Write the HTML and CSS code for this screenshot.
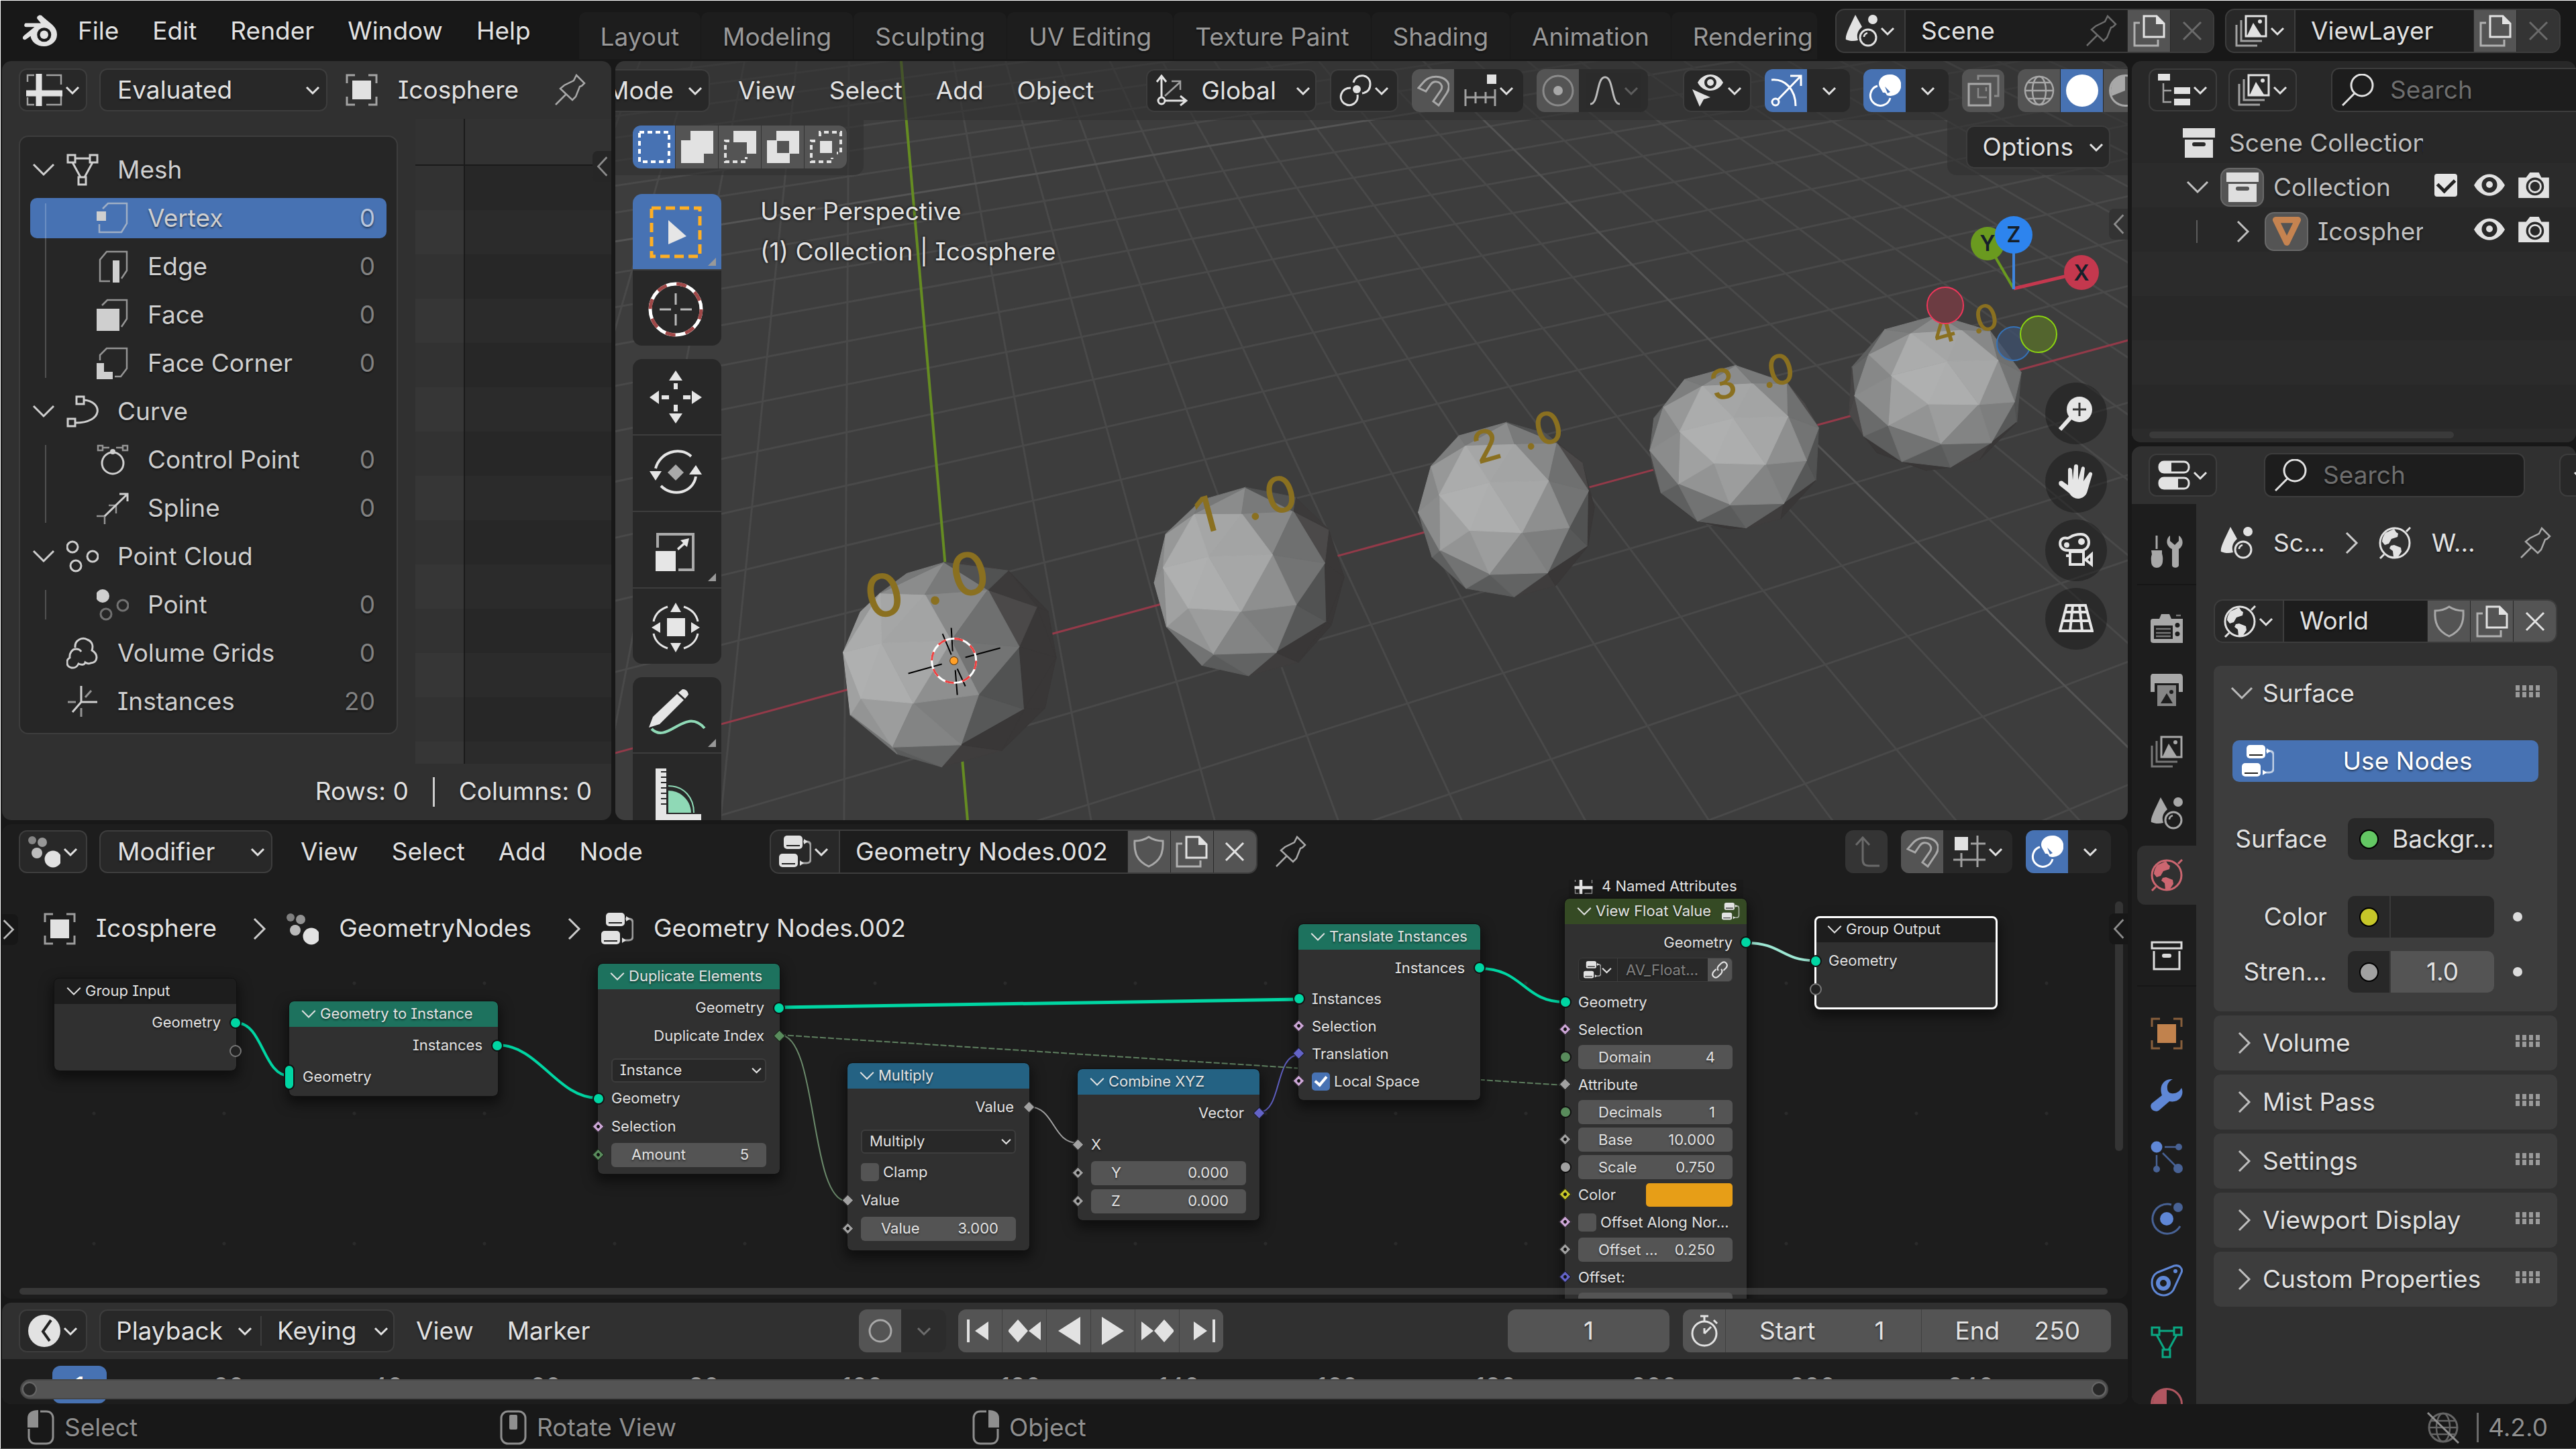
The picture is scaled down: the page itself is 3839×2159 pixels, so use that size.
FILE: index.html
```html
<!DOCTYPE html>
<html lang="en">
<head>
<meta charset="utf-8">
<title>Blender</title>
<link rel="stylesheet" href="styles.css">
</head>
<body>
<svg class="sprite" aria-hidden="true">
  <symbol id="down" viewBox="0 0 24 24"><path d="M3 8l9 9 9-9" class="s3"/></symbol>
  <symbol id="right" viewBox="0 0 24 40"><path d="M4 5l15 15-15 15" class="s3"/></symbol>
  <symbol id="left" viewBox="0 0 24 40"><path d="M20 5l-14 15 14 15" class="s3"/></symbol>
  <symbol id="open" viewBox="0 0 40 40"><path d="M5 12l15 15 15-15" class="s3"/></symbol>
  <symbol id="blender" viewBox="0 0 54 50"><path fill="currentColor" d="M25 1c2-1 4 0 6 2l13 11c6 5 9 10 9 17 0 11-10 18-20 18-11 0-20-7-21-16l-7 5c-3 2-6 0-5-3 0-1 1-2 2-3l16-13H5c-3 0-4-4-1-6 1 0 1 0 2 0h22l-5-6c-2-2-1-5 2-6z"/><circle cx="33" cy="31" r="11" fill="#181818"/><circle cx="33" cy="31" r="6.500" fill="currentColor"/></symbol>
  <symbol id="sheet" viewBox="0 0 54 48"><path d="M2 12V2h10M30 2h22v14M52 33v13H30M12 46H2V35" class="s2 dim"/><path d="M19 0v48M0 29h54" stroke="currentColor" stroke-width="9"/></symbol>
  <symbol id="object" viewBox="0 0 48 48"><path d="M2 14V2h12M34 2h12v12M46 34v12H34M14 46H2V34" class="s3 dim"/><path d="M10 10h28v28H10z" fill="currentColor"/></symbol>
  <symbol id="pin" viewBox="0 0 48 48"><path d="M2 46l15-15M33 2l12 12-4 4-3 1-6 15-5 5-18-17 6-5 14-7z" class="s2"/></symbol>
  <symbol id="mesh" viewBox="0 0 48 48"><path d="M2 2h11v11H2zM35 2h11v11H35zM18 35h11v11H18zM13 7h22M9 13l12 22M39 13L27 35" class="s3"/></symbol>
  <symbol id="vertex" viewBox="0 0 48 48"><path d="M9 10l8-8h28v30l-8 13H4V33" class="s2 dim"/><path d="M0 14h14v14H0z" fill="currentColor"/></symbol>
  <symbol id="edge" viewBox="0 0 48 48"><path d="M20 46H5V14L15 2h30v28l-8 12" class="s2 dim"/><path d="M24 15h10v33H24z" fill="currentColor"/></symbol>
  <symbol id="face" viewBox="0 0 48 48"><path d="M8 10l8-8h29v28l-8 12" class="s2 dim"/><path d="M0 15h34v33H0z" fill="currentColor"/></symbol>
  <symbol id="corner" viewBox="0 0 48 48"><path d="M5 20v-8L15 2h30v30l-9 12h-9" class="s2 dim"/><path d="M0 24h11v13h13v11H0z" fill="currentColor"/></symbol>
  <symbol id="curve" viewBox="0 0 48 48"><path d="M15 2h11v11H15zM2 35h11v11H2zM26 7c28 2 30 34-13 34" class="s3"/></symbol>
  <symbol id="cpoint" viewBox="0 0 48 48"><circle cx="24" cy="29" r="16" class="s3"/><path d="M2 3h7v7H2zM39 3h7v7h-7zM9 6h10M29 6h10" class="s2 dim"/><circle cx="24" cy="12" r="4" fill="currentColor"/></symbol>
  <symbol id="spline" viewBox="0 0 48 48"><path d="M12 36L46 3M34 3h12v11" class="s3"/><path d="M0 36h12v12M18 20h11v12" class="s2 dim"/></symbol>
  <symbol id="pcloud" viewBox="0 0 48 48"><circle cx="9" cy="10" r="8" class="s3"/><circle cx="39" cy="24" r="8" class="s3"/><circle cx="14" cy="38" r="8" class="s3"/></symbol>
  <symbol id="point" viewBox="0 0 48 48"><circle cx="9" cy="11" r="10" fill="currentColor"/><g opacity=".45"><circle cx="39" cy="25" r="8" class="s3"/><circle cx="14" cy="38" r="8" class="s3"/></g></symbol>
  <symbol id="volume" viewBox="0 0 48 48"><path d="M13 16C12 4 24 0 31 4c8 3 9 10 7 16 10 6 9 18-2 19-2 1-5 1-8-1-1 4-6 4-10 2C14 49 0 48 1 37c0-3 2-5 4-6-1-7 4-13 9-13 4 0 7 2 8 4" class="s3"/></symbol>
  <symbol id="instances" viewBox="0 0 48 48"><path d="M22 1v24h24M22 25L9 40" class="s3"/><path d="M2 25h12M22 34v13M28 18l9-10" class="s3 dim"/></symbol>
  <symbol id="copy" viewBox="0 0 48 48"><path d="M10 12H2v34h35v-9" class="s3 dim"/><path d="M16 2h19l11 11v20H16z" class="s3"/><path d="M34 1v13h13z" fill="currentColor"/></symbol>
  <symbol id="x" viewBox="0 0 48 48"><path d="M11 11l26 26M37 11L11 37" class="s3"/></symbol>
  <symbol id="scene" viewBox="0 0 48 48"><path d="M15 0l10 18c-6 5-9 12-6 20-7 2-13 1-18-1-2-6 8-24 14-37z" fill="currentColor"/><circle cx="41" cy="7" r="7" fill="currentColor"/><circle cx="34" cy="34" r="12" class="s3"/><path d="M28 33c0-3 2-5 5-6" class="s2"/></symbol>
  <symbol id="layers" viewBox="0 0 48 48"><path d="M16 2h30v30H16z" class="s3"/><path d="M18 31l9-19 12 19z" fill="currentColor"/><circle cx="37" cy="10" r="3" fill="currentColor"/><path d="M9 8v31h31" class="s3 dim"/><path d="M2 15v31h31" class="s3 dim"/></symbol>
  <symbol id="outliner" viewBox="0 0 48 48"><path d="M0 0h18v10H0zM24 20h24v10H24zM24 37h24v10H24z" fill="currentColor"/><path d="M8 14v28h12M8 25h12" class="s2 dim"/></symbol>
  <symbol id="search" viewBox="0 0 48 48"><circle cx="30" cy="17" r="16" class="s3"/><path d="M19 29L1 47" class="s3"/></symbol>
  <symbol id="archive" viewBox="0 0 48 44"><path d="M0 0h48v14H0z" fill="currentColor"/><path d="M3 17h42v27H3zM17 21a3 3 0 000 6h14a3 3 0 000-6z" fill="currentColor" fill-rule="evenodd"/></symbol>
  <symbol id="archiveline" viewBox="0 0 48 44"><path d="M2 2h44v9H2zM5 15v27h38V15" class="s3"/><rect x="17" y="19" width="14" height="6" rx="3" fill="currentColor"/></symbol>
  <symbol id="eye" viewBox="0 0 48 34"><path fill="currentColor" fill-rule="evenodd" d="M1 17C13-5 35-5 47 17 35 38 13 38 1 17zM24 5a11 11 0 100 23 11 11 0 000-23z"/><circle cx="24" cy="16" r="5" fill="currentColor"/></symbol>
  <symbol id="camera" viewBox="0 0 48 40"><path fill="currentColor" fill-rule="evenodd" d="M0 8h12l6-8h14l4 8h12v32H0zM26 8a14 14 0 100 28 14 14 0 000-28z"/><circle cx="26" cy="22" r="9" class="s3"/></symbol>
  <symbol id="tri" viewBox="0 0 48 48"><path d="M6 5h36L24 42z" fill="none" stroke="#c58350" stroke-width="10" stroke-linejoin="round"/></symbol>
  <symbol id="props" viewBox="0 0 48 44"><rect x="2" y="2" width="44" height="16" rx="7" class="s3"/><path d="M8 1h12v18H8c-9 0-9-18 0-18z" fill="currentColor"/><rect x="2" y="26" width="44" height="16" rx="7" class="s3"/><path d="M8 25h22v18H8c-9 0-9-18 0-18z" fill="currentColor"/></symbol>
  <symbol id="tool" viewBox="0 0 48 48"><path d="M9 0v20" class="s3"/><path d="M1 22h16v5c2 6 1 10 1 12-1 12-17 12-17 0 0-2-1-6 1-11zM29 0v8l7 6 6-6V0c8 5 7 16 0 20v24c0 5-10 5-10 0V20c-9-4-10-15-3-20z" fill="currentColor"/></symbol>
  <symbol id="render" viewBox="0 0 48 44"><path fill="currentColor" fill-rule="evenodd" d="M13 8l3-7h12l3 7h17v36H4c-2 0-4-1-4-4V12c0-3 1-4 4-4zM5 18v20h28V18zM40 14a3 3 0 100 7 3 3 0 000-7zM40 27a3 3 0 100 7 3 3 0 000-7z"/><path d="M8 23h22M8 29h22M8 34h22M38 3h7" class="s2 dim"/></symbol>
  <symbol id="output" viewBox="0 0 48 48"><path d="M4 0h40c3 0 4 3 4 5v22h-6V14H6v13H0V5c0-3 1-5 4-5z" fill="currentColor"/><path opacity=".75" fill="currentColor" fill-rule="evenodd" d="M10 17h28v31H10zM15 44h18l-9-15zM31 24a3 3 0 100 6 3 3 0 000-6z"/></symbol>
  <symbol id="world" viewBox="0 0 48 48"><circle cx="24" cy="24" r="22" class="s3"/><path d="M41 7l6-6M2 47l6-6" class="s3"/><path fill="currentColor" d="M10 9l13-6 3 5 3 2-1 5-9 3-4 7-6 2-4-5c0-5 2-9 5-13zM18 28l5-1 10 4 1 6-6 9-6-1-1-9-5-4z"/></symbol>
  <symbol id="shield" viewBox="0 0 48 48"><path d="M24 2c6 4 12 6 21 6 1 17-3 30-21 38C6 38 2 25 3 8c9 0 15-2 21-6z" class="s3"/></symbol>
  <symbol id="nodes" viewBox="0 0 48 48"><rect x="7" y="0" width="28" height="20" rx="5" fill="currentColor"/><rect x="0" y="27" width="28" height="20" rx="5" fill="currentColor"/><path d="M11 15h20M4 42h20" stroke="#222" stroke-width="2"/><path d="M36 9h5c4 0 6 2 6 6v20c0 4-2 6-6 6h-8" class="s3 dim"/><path d="M37 5v8l6-4zM31 37v8l6-4z" fill="currentColor"/></symbol>
  <symbol id="wrench" viewBox="0 0 48 48"><path fill="currentColor" d="M33 0c-6 3-9 8-8 14 0 4 3 7 6 7 6 1 12-2 15-8 5 10-3 23-18 20L13 46c-3 3-8 2-11-1-3-4-2-8 1-10l14-11C12 11 19-1 33 0z"/></symbol>
  <symbol id="particles" viewBox="0 0 48 48"><circle cx="9" cy="9" r="8.500" fill="currentColor"/><g class="dim"><circle cx="42" cy="9" r="5" fill="currentColor"/><circle cx="9" cy="42" r="5" fill="currentColor"/><circle cx="41" cy="41" r="7" fill="currentColor"/><path d="M21 9h18M9 21v18M18 18l20 20" class="s2"/></g></symbol>
  <symbol id="physics" viewBox="0 0 48 48"><circle cx="24" cy="24" r="10" fill="currentColor"/><g class="dim"><circle cx="41" cy="7" r="7" fill="currentColor"/><path d="M31 3a22 22 0 1013 32" class="s3"/></g></symbol>
  <symbol id="constraint" viewBox="0 0 48 48"><path d="M10 12L35 2c9-2 13 5 11 10L34 38C25 52 2 47 2 27c0-6 3-12 8-15z" class="s3"/><circle cx="19" cy="28" r="8" fill="none" stroke="currentColor" stroke-width="6"/><circle cx="37" cy="10" r="3" fill="currentColor"/></symbol>
  <symbol id="material" viewBox="0 0 48 48"><circle cx="24" cy="24" r="22.500" class="s3"/><path d="M24 2v22L4 32C0 18 8 2 24 2z" fill="currentColor"/></symbol>
  <symbol id="globe" viewBox="0 0 48 48"><circle cx="24" cy="24" r="21" class="s2"/><ellipse cx="24" cy="24" rx="10" ry="21" class="s2"/><path d="M3 24h42M7 12h34M7 36h34" class="s2"/></symbol>
  <symbol id="globeoff" viewBox="0 0 48 48"><g class="dim"><circle cx="24" cy="24" r="21" class="s3"/><ellipse cx="24" cy="24" rx="10" ry="21" class="s2"/><path d="M3 24h42M7 14h34M7 34h34" class="s2"/></g><path d="M1 2l46 45" class="s3"/></symbol>
  <symbol id="gnodes" viewBox="0 0 48 48"><circle cx="6" cy="7" r="6" fill="currentColor" opacity=".5"/><circle cx="21" cy="10" r="7" fill="currentColor" opacity=".6"/><circle cx="13" cy="26" r="8" fill="currentColor" opacity=".8"/><circle cx="37" cy="35" r="12.500" fill="currentColor"/></symbol>
  <symbol id="magnet" viewBox="0 0 48 48"><path d="M2 20l7-8C24-6 58 6 44 28L32 46l-8-6 11-16c7-10-8-19-15-9l-7 10z" class="s3"/></symbol>
  <symbol id="snapinc" viewBox="0 0 48 48"><path d="M34 0h14v14H34z" fill="currentColor"/><path d="M2 22v25M17 26v17M32 26v17M46 22v25M2 34h44" class="s3 dim"/></symbol>
  <symbol id="snapgrid" viewBox="0 0 48 48"><path d="M2 2h20v20H2z" fill="currentColor"/><path d="M36 0v47M12 26v21M26 12h22M0 36h48" class="s3 dim"/></symbol>
  <symbol id="prop" viewBox="0 0 48 48"><circle cx="24" cy="24" r="7" fill="currentColor"/><circle cx="24" cy="24" r="22" class="s3 dim"/></symbol>
  <symbol id="falloff" viewBox="0 0 48 48"><path d="M2 44c13 0 9-40 22-40s9 40 22 40" class="s3"/></symbol>
  <symbol id="visible" viewBox="0 0 48 48"><path fill="currentColor" fill-rule="evenodd" d="M8 12C16-4 38-4 46 12 38 28 16 28 8 12zM27 3a9 9 0 100 18 9 9 0 000-18z"/><circle cx="27" cy="12" r="5" fill="currentColor"/><path d="M0 22l27 12-10 3-6 11z" fill="currentColor"/></symbol>
  <symbol id="gizmo" viewBox="0 0 48 48"><path d="M2 8c20-2 36 14 36 39M12 37L45 3M30 2h16v15" class="s3"/><circle cx="8" cy="41" r="5" class="s3"/></symbol>
  <symbol id="overlay" viewBox="0 0 48 48"><path fill="currentColor" fill-rule="evenodd" d="M31 0a16 16 0 11-4 31c-2-4-2-4-6-4-2-5-6-9-6-13C15 6 22 0 31 0zM24 18l8 8-4 2z"/><path d="M13 17A15 15 0 1032 35" class="s3"/></symbol>
  <symbol id="xray" viewBox="0 0 48 48"><path d="M2 14h32v32H2z" class="s3"/><path d="M16 8V2h30v30h-6" class="s3 dim"/><path d="M16 20v14h13M28 19v6" class="s2 dim"/></symbol>
  <symbol id="solid" viewBox="0 0 48 48"><circle cx="24" cy="24" r="24" fill="currentColor"/></symbol>
  <symbol id="orient" viewBox="0 0 48 48"><path d="M9 34V3M2 11l7-9 7 9M14 39h31M37 32l9 7-9 7" class="s3"/><circle cx="9" cy="39" r="5" class="s3"/><path d="M14 32l22-20M24 10h13v13" class="s2 dim"/></symbol>
  <symbol id="pivot" viewBox="0 0 48 48"><circle cx="26" cy="22" r="6" fill="currentColor"/><path d="M21 12C25-3 46-1 46 14c0 9-5 13-12 14M17 20C2 20-2 36 7 43c10 7 22-1 20-13" class="s3"/></symbol>
  <symbol id="linkic" viewBox="0 0 48 48"><path d="M20 26c-4-5-3-8 0-12l8-8c10-9 21 3 13 13l-7 7M28 22c4 5 3 8 0 12l-8 8C10 51-1 39 7 29l7-7" class="s4"/></symbol>
  <symbol id="up" viewBox="0 0 48 48"><path d="M8 14l10-11 10 11M18 4v32c0 6 3 9 9 9h16" class="s3"/></symbol>
  <symbol id="clock" viewBox="0 0 48 48"><circle cx="24" cy="24" r="24" fill="currentColor"/><path d="M34 8L22 25l10 14" fill="none" stroke="#222" stroke-width="4"/></symbol>
  <symbol id="ring" viewBox="0 0 48 48"><circle cx="24" cy="24" r="16" class="s3"/></symbol>
  <symbol id="first" viewBox="0 0 48 48"><path d="M6 7v34" class="s4"/><path d="M36 10v28L16 24z" fill="currentColor"/></symbol>
  <symbol id="last" viewBox="0 0 48 48"><path d="M42 7v34" class="s4"/><path d="M12 10v28l20-14z" fill="currentColor"/></symbol>
  <symbol id="prevkey" viewBox="0 0 48 48"><path d="M14 7l15 17-15 17L-1 24zM48 10v28L30 24z" fill="currentColor"/></symbol>
  <symbol id="nextkey" viewBox="0 0 48 48"><path d="M34 7l15 17-15 17L19 24zM0 10v28l18-14z" fill="currentColor"/></symbol>
  <symbol id="playback" viewBox="0 0 48 48"><path d="M41 3v42L8 24z" fill="currentColor"/></symbol>
  <symbol id="play" viewBox="0 0 48 48"><path d="M7 3v42l33-21z" fill="currentColor"/></symbol>
  <symbol id="stopwatch" viewBox="0 0 48 48"><circle cx="24" cy="28" r="18" class="s3"/><path d="M18 2h12M24 2v8M38 8l5 5M24 28l10-10M24 28v-8" class="s3"/></symbol>
  <symbol id="mouseL" viewBox="0 0 40 52"><path d="M19 2h9c6 0 10 4 10 10v28c0 6-4 10-10 10H12C6 50 2 46 2 40V28" class="s3"/><path d="M0 26V12C0 4 6 0 16 0v26z" fill="currentColor"/></symbol>
  <symbol id="mouseM" viewBox="0 0 40 52"><rect x="2" y="2" width="36" height="48" rx="10" class="s3"/><rect x="14" y="7" width="12" height="22" rx="2" fill="currentColor"/></symbol>
  <symbol id="mouseR" viewBox="0 0 40 52"><path d="M21 2h-9C6 2 2 6 2 12v28c0 6 4 10 10 10h16c6 0 10-4 10-10V28" class="s3"/><path d="M40 26V12C40 4 34 0 24 0v26z" fill="currentColor"/></symbol>
  <symbol id="sm1" viewBox="0 0 48 48"><path d="M2 2h44v44H2z" fill="none" stroke="currentColor" stroke-width="4" stroke-dasharray="7 5"/></symbol>
  <symbol id="sm2" viewBox="0 0 48 48"><path d="M14 0h34v34H34v14H0V14h14z" fill="currentColor"/></symbol>
  <symbol id="sm3" viewBox="0 0 48 48"><path d="M14 0h34v34H34V17H14z" fill="currentColor"/><path d="M8 15H2v31h31v-7" class="s4" stroke-dasharray="7 5"/></symbol>
  <symbol id="sm4" viewBox="0 0 48 48"><path fill-rule="evenodd" d="M14 0h34v34H34v14H0V14h14zM15 15v18h18V15z" fill="currentColor"/></symbol>
  <symbol id="sm5" viewBox="0 0 48 48"><path d="M15 15h18v18H15z" fill="currentColor"/><path d="M15 8V2h31v31h-6M8 15H2v31h31v-6" class="s4" stroke-dasharray="7 5"/></symbol>
</svg>

<header class="topbar">
  <button class="logo" aria-label="Blender"><svg class="ic wide"><use href="#blender"/></svg></button>
  <nav class="menus"><button>File</button><button>Edit</button><button>Render</button><button>Window</button><button>Help</button></nav>
  <nav class="tabs"><button>Layout</button><button>Modeling</button><button>Sculpting</button><button>UV Editing</button><button>Texture Paint</button><button>Shading</button><button>Animation</button><button>Rendering</button></nav>
  <div class="idrow scene-id">
    <button class="ed" aria-label="Browse scene"><svg class="ic"><use href="#scene"/></svg><svg class="dn"><use href="#down"/></svg></button>
    <label class="idname"><input type="text" value="Scene" aria-label="Scene name"><svg class="ic faint"><use href="#pin"/></svg></label>
    <button class="gray sq" aria-label="New scene"><svg class="ic"><use href="#copy"/></svg></button>
    <button class="off sq" aria-label="Unlink scene"><svg class="ic"><use href="#x"/></svg></button>
  </div>
  <div class="idrow layer-id">
    <button class="ed" aria-label="Browse view layer"><svg class="ic"><use href="#layers"/></svg><svg class="dn"><use href="#down"/></svg></button>
    <label class="idname"><input type="text" value="ViewLayer" aria-label="View layer name"></label>
    <button class="gray sq" aria-label="New view layer"><svg class="ic"><use href="#copy"/></svg></button>
    <button class="off sq" aria-label="Remove view layer"><svg class="ic"><use href="#x"/></svg></button>
  </div>
</header>

<main class="screen">
  <div class="left-col">
    <div class="upper">
      <section class="area sheet">
        <div class="head">
          <button class="btn ed" aria-label="Editor type"><svg class="ic wide"><use href="#sheet"/></svg><svg class="dn"><use href="#down"/></svg></button>
          <div class="dd eval"><select aria-label="Object evaluation state"><option>Evaluated</option></select><svg class="dn"><use href="#down"/></svg></div>
          <svg class="ic obj"><use href="#object"/></svg><span class="bright">Icosphere</span>
          <button class="bare push" aria-label="Pin"><svg class="ic mid"><use href="#pin"/></svg></button>
        </div>
        <div class="sheet-body">
          <ul class="tree">
            <li><div class="trow"><svg class="op"><use href="#open"/></svg><svg class="ic"><use href="#mesh"/></svg>Mesh</div>
              <ul>
                <li><div class="trow sub sel"><svg class="ic"><use href="#vertex"/></svg>Vertex<b>0</b></div></li>
                <li><div class="trow sub"><svg class="ic"><use href="#edge"/></svg>Edge<b>0</b></div></li>
                <li><div class="trow sub"><svg class="ic"><use href="#face"/></svg>Face<b>0</b></div></li>
                <li><div class="trow sub"><svg class="ic"><use href="#corner"/></svg>Face Corner<b>0</b></div></li>
              </ul></li>
            <li><div class="trow"><svg class="op"><use href="#open"/></svg><svg class="ic"><use href="#curve"/></svg>Curve</div>
              <ul>
                <li><div class="trow sub"><svg class="ic"><use href="#cpoint"/></svg>Control Point<b>0</b></div></li>
                <li><div class="trow sub"><svg class="ic"><use href="#spline"/></svg>Spline<b>0</b></div></li>
              </ul></li>
            <li><div class="trow"><svg class="op"><use href="#open"/></svg><svg class="ic"><use href="#pcloud"/></svg>Point Cloud</div>
              <ul><li><div class="trow sub"><svg class="ic"><use href="#point"/></svg>Point<b>0</b></div></li></ul></li>
            <li><div class="trow"><i class="op"></i><svg class="ic"><use href="#volume"/></svg>Volume Grids<b>0</b></div></li>
            <li><div class="trow"><i class="op"></i><svg class="ic"><use href="#instances"/></svg>Instances<b>20</b></div></li>
          </ul>
          <div class="cells"><div class="corner-cell"></div><div class="col-head"></div><div class="index"></div><div class="data"></div></div>
        </div>
        <div class="sheet-foot"><span>Rows: 0</span><i></i><span>Columns: 0</span></div>
        <button class="flap flap-sheet" aria-label="Show sidebar"><svg><use href="#left"/></svg></button>
      </section>

      <section class="area viewport">
        <svg class="scene3d" viewBox="0 0 2254 1130" preserveAspectRatio="xMidYMid slice">
          <g id="grid"></g><g id="spheres"></g>
          <g transform="translate(-917 -91)">
            <g class="label3d">
              <text transform="translate(1298 924) rotate(-14)" x="0 87 131" font-size="88">0.0</text>
              <text transform="translate(1789 796) rotate(-15)" x="0 75 107" font-size="74">1.0</text>
              <text transform="translate(2202 692) rotate(-16)" x="0 74 95" font-size="66">2.0</text>
              <text transform="translate(2554 598) rotate(-14)" x="0 77 88" font-size="62">3.0</text>
              <text transform="translate(2884 515) rotate(-16)" x="0 60 67" font-size="54">4.0</text>
            </g>
            <path d="M1354 1003l50-14M1439 979l52-14M1418 935l2 35M1424 998l3 37M1405 944l13 31M1427 996l12 26" stroke="#000" stroke-width="2"/>
            <circle cx="1422" cy="984" r="33" fill="none" stroke="#fff" stroke-width="3"/>
            <circle cx="1422" cy="984" r="33" fill="none" stroke="#f04040" stroke-width="3" stroke-dasharray="13 13"/>
            <circle cx="1422" cy="984" r="6" fill="#ffa028" stroke="#553311" stroke-width="1"/>
          </g>
        </svg>
        <div class="head vp-head">
          <div class="dd mode"><select aria-label="Interaction mode"><option>Mode</option></select><svg class="dn"><use href="#down"/></svg></div>
          <nav class="menus"><button>View</button><button>Select</button><button>Add</button><button>Object</button></nav>
          <div class="btn orient"><svg class="ic"><use href="#orient"/></svg><select aria-label="Transform orientation"><option>Global</option></select><svg class="dn"><use href="#down"/></svg></div>
          <button class="btn ed" aria-label="Pivot point"><svg class="ic"><use href="#pivot"/></svg><svg class="dn"><use href="#down"/></svg></button>
          <div class="join"><button class="gray sq" aria-label="Snap"><svg class="ic mid"><use href="#magnet"/></svg></button><button class="ed" aria-label="Snap to"><svg class="ic"><use href="#snapinc"/></svg><svg class="dn"><use href="#down"/></svg></button></div>
          <div class="join soft"><button class="gray sq" aria-label="Proportional editing"><svg class="ic mid"><use href="#prop"/></svg></button><button class="ed fade" aria-label="Falloff"><svg class="ic"><use href="#falloff"/></svg><svg class="dn faint"><use href="#down"/></svg></button></div>
          <button class="btn ed vis" aria-label="Selectability and visibility"><svg class="ic"><use href="#visible"/></svg><svg class="dn"><use href="#down"/></svg></button>
          <div class="join"><button class="blue sq" aria-label="Gizmos"><svg class="ic"><use href="#gizmo"/></svg></button><button class="sq" aria-label="Gizmo options"><svg class="dn"><use href="#down"/></svg></button></div>
          <div class="join"><button class="blue sq" aria-label="Overlays"><svg class="ic"><use href="#overlay"/></svg></button><button class="sq" aria-label="Overlay options"><svg class="dn"><use href="#down"/></svg></button></div>
          <div class="join"><button class="gray sq" aria-label="X-ray"><svg class="ic mid"><use href="#xray"/></svg></button></div>
          <div class="join"><button class="gray sq" aria-label="Wireframe"><svg class="ic mid"><use href="#globe"/></svg></button><button class="blue sq" aria-label="Solid"><svg class="ic"><use href="#solid"/></svg></button><button class="gray sq" aria-label="Material preview"><svg class="ic mid"><use href="#material"/></svg></button></div>
        </div>
        <div class="vp-row">
          <div class="vp-shade left"><div class="join"><button class="blue sq" aria-label="Set selection"><svg class="ic"><use href="#sm1"/></svg></button><button class="gray sq" aria-label="Extend"><svg class="ic"><use href="#sm2"/></svg></button><button class="gray sq" aria-label="Subtract"><svg class="ic"><use href="#sm3"/></svg></button><button class="gray sq" aria-label="Invert"><svg class="ic"><use href="#sm4"/></svg></button><button class="gray sq" aria-label="Intersect"><svg class="ic"><use href="#sm5"/></svg></button></div></div>
          <div class="vp-shade"><button class="btn options">Options<svg class="dn"><use href="#down"/></svg></button></div>
        </div>
        <div class="vp-body">
          <div class="toolbar">
            <div class="tgroup">
              <button class="tool on" aria-label="Select box"><svg viewBox="0 0 132 110"><path d="M28 20h72v72H28z" fill="none" stroke="#ffaf23" stroke-width="5" stroke-dasharray="14 7"/><path d="M53 38v36l27-12z" fill="#e6e6e6"/><path class="more" d="M124 94v12h-12z"/></svg></button>
              <button class="tool" aria-label="Cursor"><svg viewBox="0 0 132 110"><circle cx="64" cy="57" r="38" fill="none" stroke="#fff" stroke-width="5"/><circle cx="64" cy="57" r="38" fill="none" stroke="#a04848" stroke-width="5" stroke-dasharray="15 15"/><path d="M40 57h17M71 57h17M64 33v17M64 64v17" stroke="#bbb" stroke-width="3"/></svg></button>
            </div>
            <div class="tgroup">
              <button class="tool" aria-label="Move"><svg viewBox="0 0 132 110"><path fill="#e6e6e6" d="M64 16l10 15H54zM64 95l10-15H54zM25 56l14-10v20zM103 56L88 46v20zM61 35h6v9h-6zM61 67h6v10h-6zM43 53h11v6H43zM75 53h11v6H75z"/></svg></button>
              <button class="tool" aria-label="Rotate"><svg viewBox="0 0 132 110"><path d="M34 48c6-24 36-34 53-18M42 74c18 18 48 10 52-14" fill="none" stroke="#e6e6e6" stroke-width="4"/><path fill="#e6e6e6" d="M25 52h18l-9 14zM84 57h19l-9-14z"/><path d="M64 42l12 12-12 12-12-12z" fill="#aaa"/></svg></button>
              <button class="tool" aria-label="Scale"><svg viewBox="0 0 132 110"><path d="M37 52V32h53v53H68" fill="none" stroke="#aaa" stroke-width="4"/><path d="M34 57h30v30H34z" fill="#e6e6e6"/><path d="M84 38l-3 13-4-3-9 8-2-3 9-8-4-4z" fill="#e6e6e6"/><path class="more" d="M124 90v12h-12z"/></svg></button>
              <button class="tool" aria-label="Transform"><svg viewBox="0 0 132 110"><path d="M52 26C40 30 33 38 31 48M76 26c12 4 19 12 21 22M31 66c2 10 9 18 21 22M97 66c-2 10-9 18-21 22" fill="none" stroke="#e6e6e6" stroke-width="3"/><path d="M51 43h27v27H51zM64 20l8 14H56zM64 94l8-14H56zM28 57l13-8v16zM100 57l-13-8v16z" fill="#e6e6e6"/></svg></button>
            </div>
            <div class="tgroup">
              <button class="tool" aria-label="Annotate"><svg viewBox="0 0 132 110"><path d="M28 76c24 24 50-34 79-1" fill="none" stroke="#8fd9b6" stroke-width="4"/><path d="M24 74l6-16L66 24l10 9-36 36zM68 22l6-5c6-1 9 5 9 8l-5 6z" fill="#e6e6e6"/><path class="more" d="M124 91v12h-12z"/></svg></button>
              <button class="tool" aria-label="Measure"><svg viewBox="0 0 132 110"><path d="M53 88V54c18 0 34 14 34 34z" fill="#8fd9b6"/><path d="M53 47c24 0 38 18 38 40" fill="none" stroke="#8fd9b6" stroke-width="2"/><path d="M33 20h18v68h52v12H33zM42 26h9M42 34h9M42 42h9M42 50h9M42 58h9M42 66h9M42 74h9" fill="#e6e6e6" stroke="#282828" stroke-width="2"/></svg></button>
            </div>
          </div>
          <p class="overlay-text">User Perspective<br>(1) Collection | Icosphere</p>
        </div>
        <svg class="axes" viewBox="2870 310 270 240">
          <circle cx="3001" cy="512" r="25" fill="#3d5170" fill-opacity=".7" stroke="#3572b8" stroke-width="2"/>
          <circle cx="3038" cy="498" r="27" fill="#53652e" stroke="#8cd60f" stroke-width="2"/>
          <circle cx="2899" cy="455" r="27" fill="#6c3c42" stroke="#f0365a" stroke-width="2"/>
          <path d="M3001 430L2962 363" stroke="#6a9a1f" stroke-width="4"/><circle cx="2962" cy="363" r="25" fill="#6a9a1f"/><text x="2962" y="374" class="ax">Y</text>
          <path d="M3001 430L3102 406" stroke="#c4384e" stroke-width="5"/><path d="M3001 431V350" stroke="#3f85dd" stroke-width="4"/>
          <circle cx="3102" cy="406" r="26" fill="#c4384e"/><text x="3102" y="418" class="ax">X</text>
          <circle cx="3001" cy="350" r="28" fill="#2d84ee"/><text x="3001" y="361" class="ax">Z</text>
        </svg>
        <div class="nav3d">
          <button aria-label="Zoom"><svg viewBox="0 0 52 52"><circle cx="31" cy="20" r="19" fill="#e6e6e6"/><path d="M18 32L2 50" stroke="#e6e6e6" stroke-width="6"/><path d="M31 10v20M21 20h20" stroke="#333" stroke-width="3"/></svg></button>
          <button aria-label="Pan"><svg viewBox="0 0 52 52"><path fill="#e6e6e6" d="M14 31V8c0-4 5-4 6 0l1 15L23 2c1-3 5-3 6 0v21l5-18c1-3 5-2 5 1l-2 19 8-12c2-3 6-1 5 2l-7 24c-3 14-20 16-27 4L1 31c-3-6 3-8 6-5z"/></svg></button>
          <button aria-label="Camera view"><svg viewBox="0 0 52 52"><path d="M17 28h20v19H17zM16 34h-5M40 40l9-8v15z" fill="none" stroke="#e6e6e6" stroke-width="4"/><path d="M13 26C-2 26-1 4 13 8c4 0 6-6 20-6 16 0 16 24 0 24z" fill="none" stroke="#e6e6e6" stroke-width="4"/><circle cx="12" cy="18" r="4" fill="#e6e6e6"/><circle cx="34" cy="13" r="5" fill="#e6e6e6"/></svg></button>
          <button aria-label="Perspective"><svg viewBox="0 0 52 52"><path d="M12 6h28l10 38H2zM10 16h32M7 29h38M21 6l-4 38M31 6l4 38" fill="none" stroke="#e6e6e6" stroke-width="4"/></svg></button>
        </div>
        <button class="flap flap-vp" aria-label="Show sidebar"><svg><use href="#left"/></svg></button>
      </section>
    </div>

    <section class="area nodes">
      <div class="head nd-head">
        <button class="btn ed" aria-label="Editor type"><svg class="ic"><use href="#gnodes"/></svg><svg class="dn"><use href="#down"/></svg></button>
        <div class="dd modi"><select aria-label="Node tree context"><option>Modifier</option></select><svg class="dn"><use href="#down"/></svg></div>
        <nav class="menus"><button>View</button><button>Select</button><button>Add</button><button>Node</button></nav>
        <div class="idrow tree-id">
          <button class="ed" aria-label="Browse node tree"><svg class="ic"><use href="#nodes"/></svg><svg class="dn"><use href="#down"/></svg></button>
          <label class="idname"><input type="text" value="Geometry Nodes.002" aria-label="Node tree name"></label>
          <button class="sq gray" aria-label="Fake user"><svg class="ic mid"><use href="#shield"/></svg></button>
          <button class="sq gray" aria-label="New node tree"><svg class="ic"><use href="#copy"/></svg></button>
          <button class="sq gray" aria-label="Unlink"><svg class="ic"><use href="#x"/></svg></button>
        </div>
        <button class="bare" aria-label="Pin"><svg class="ic mid"><use href="#pin"/></svg></button>
        <div class="nd-right">
          <div class="join"><button class="off sq" aria-label="Parent node tree"><svg class="ic"><use href="#up"/></svg></button></div>
          <div class="join"><button class="gray sq" aria-label="Snap"><svg class="ic mid"><use href="#magnet"/></svg></button><button class="ed" aria-label="Snap to"><svg class="ic"><use href="#snapgrid"/></svg><svg class="dn"><use href="#down"/></svg></button></div>
          <div class="join"><button class="blue sq" aria-label="Overlays"><svg class="ic"><use href="#overlay"/></svg></button><button class="sq" aria-label="Overlay options"><svg class="dn"><use href="#down"/></svg></button></div>
        </div>
      </div>
      <div class="canvas">
        <svg class="links"><g transform="translate(-3 -1311)" fill="none">
          <g stroke="#00d6a3" stroke-width="4"><path d="M352 1524C392 1524 392 1603 431 1603M741 1557C803 1557 830 1636 891 1636M2205 1443C2270 1443 2270 1493 2332 1493"/><path d="M1162 1501L1935 1489" stroke-width="5"/><path d="M2603 1405C2655 1405 2655 1431 2704 1431" stroke="#9ee8d4"/></g>
          <path d="M1162 1542C1220 1542 1205 1790 1263 1790" stroke="#6b8a6b" stroke-width="2"/>
          <path d="M1533 1649C1572 1649 1568 1703 1606 1703" stroke="#a1a1a1" stroke-width="2"/>
          <path d="M1877 1657C1910 1657 1900 1572 1935 1572" stroke="#5f5fc0" stroke-width="2"/>
          <path d="M1162 1542L2332 1617" stroke="#5f8060" stroke-width="2" stroke-dasharray="9 3"/>
        </g></svg>
        <div class="crumbs"><svg class="ic"><use href="#object"/></svg><span>Icosphere</span><svg class="rt"><use href="#right"/></svg><svg class="ic"><use href="#gnodes"/></svg><span>GeometryNodes</span><svg class="rt"><use href="#right"/></svg><svg class="ic"><use href="#nodes"/></svg><span>Geometry Nodes.002</span></div>

        <article class="node n-in"><h3 class="io"><svg><use href="#open"/></svg>Group Input</h3><div class="nb">
          <div class="nr out">Geometry<i class="sk c geo"></i></div><div class="nr out"><i class="sk c void"></i></div></div></article>
        <article class="node n-g2i"><h3 class="geoh"><svg><use href="#open"/></svg>Geometry to Instance</h3><div class="nb">
          <div class="nr out">Instances<i class="sk c geo"></i></div><div class="nr gap">Geometry<i class="sk pill geo"></i></div></div></article>
        <article class="node n-dup"><h3 class="geoh"><svg><use href="#open"/></svg>Duplicate Elements</h3><div class="nb">
          <div class="nr out">Geometry<i class="sk c geo"></i></div><div class="nr out">Duplicate Index<i class="sk d int"></i></div>
          <div class="nr biggap"><div class="ndd"><select aria-label="Domain"><option>Instance</option></select><svg><use href="#down"/></svg></div></div>
          <div class="nr">Geometry<i class="sk c geo"></i></div><div class="nr">Selection<i class="sk d h bool"></i></div>
          <div class="nr"><label class="num"><span>Amount</span><input type="text" value="5"></label><i class="sk d h int"></i></div></div></article>
        <article class="node n-mul"><h3 class="math"><svg><use href="#open"/></svg>Multiply</h3><div class="nb">
          <div class="nr out">Value<i class="sk d flt"></i></div>
          <div class="nr biggap"><div class="ndd"><select aria-label="Operation"><option>Multiply</option></select><svg><use href="#down"/></svg></div></div>
          <div class="nr chk clamp"><label><input type="checkbox">Clamp</label></div>
          <div class="nr">Value<i class="sk d flt"></i></div>
          <div class="nr"><label class="num"><span>Value</span><input type="text" value="3.000"></label><i class="sk d h flt"></i></div></div></article>
        <article class="node n-xyz"><h3 class="math"><svg><use href="#open"/></svg>Combine XYZ</h3><div class="nb">
          <div class="nr out">Vector<i class="sk d vec"></i></div>
          <div class="nr gap">X<i class="sk d flt"></i></div>
          <div class="nr"><label class="num"><span>Y</span><input type="text" value="0.000"></label><i class="sk d h flt"></i></div>
          <div class="nr"><label class="num"><span>Z</span><input type="text" value="0.000"></label><i class="sk d h flt"></i></div></div></article>
        <article class="node tight n-tr"><h3 class="geoh"><svg><use href="#open"/></svg>Translate Instances</h3><div class="nb">
          <div class="nr out">Instances<i class="sk c geo"></i></div><div class="nr gap">Instances<i class="sk c geo"></i></div>
          <div class="nr">Selection<i class="sk d h bool"></i></div><div class="nr">Translation<i class="sk d vec"></i></div>
          <div class="nr chk"><label><input type="checkbox" checked>Local Space</label><i class="sk d h bool"></i></div></div></article>
        <div class="named"><svg><use href="#sheet"/></svg>4 Named Attributes</div>
        <article class="node tight n-view"><h3 class="grp"><svg><use href="#open"/></svg>View Float Value<svg class="gi"><use href="#nodes"/></svg></h3><div class="nb">
          <div class="nr out">Geometry<i class="sk c geo"></i></div>
          <div class="nr"><div class="nid"><button aria-label="Browse group"><svg class="a"><use href="#nodes"/></svg><svg class="b"><use href="#down"/></svg></button><input type="text" value="AV_Float..." aria-label="Group name"><button class="lk" aria-label="Linked"><svg class="a"><use href="#linkic"/></svg></button></div></div>
          <div class="nr gap">Geometry<i class="sk c geo"></i></div><div class="nr">Selection<i class="sk d h bool"></i></div>
          <div class="nr"><label class="num"><span>Domain</span><input type="text" value="4"></label><i class="sk c int"></i></div>
          <div class="nr">Attribute<i class="sk d flt"></i></div>
          <div class="nr"><label class="num"><span>Decimals</span><input type="text" value="1"></label><i class="sk c int"></i></div>
          <div class="nr"><label class="num"><span>Base</span><input type="text" value="10.000"></label><i class="sk d h flt"></i></div>
          <div class="nr"><label class="num"><span>Scale</span><input type="text" value="0.750"></label><i class="sk c flt"></i></div>
          <div class="nr">Color<button class="swatch" aria-label="Color"></button><i class="sk d h col"></i></div>
          <div class="nr chk"><label><input type="checkbox">Offset Along Nor...</label><i class="sk d h bool"></i></div>
          <div class="nr"><label class="num"><span>Offset ...</span><input type="text" value="0.250"></label><i class="sk d h flt"></i></div>
          <div class="nr">Offset:<i class="sk d h vec"></i></div>
          <div class="nr"><div class="num"></div></div></div></article>
        <article class="node n-out"><h3 class="io"><svg><use href="#open"/></svg>Group Output</h3><div class="nb">
          <div class="nr">Geometry<i class="sk c geo"></i></div><div class="nr"><i class="sk c void"></i></div></div></article>
        <div class="hbar"></div><div class="vbar"></div>
        <button class="flap flap-nl" aria-label="Show tools"><svg><use href="#right"/></svg></button>
        <button class="flap flap-nr" aria-label="Show sidebar"><svg><use href="#left"/></svg></button>
      </div>
    </section>

    <section class="area timeline">
      <div class="head tl-head">
        <button class="btn ed" aria-label="Editor type"><svg class="ic"><use href="#clock"/></svg><svg class="dn"><use href="#down"/></svg></button>
        <div class="join outline"><button class="pb">Playback<svg class="dn"><use href="#down"/></svg></button><button class="pb">Keying<svg class="dn"><use href="#down"/></svg></button></div>
        <nav class="menus"><button>View</button><button>Marker</button></nav>
        <div class="tl-mid">
          <div class="join soft"><button class="gray sq" aria-label="Auto keying"><svg class="ic mid"><use href="#ring"/></svg></button><button class="sq" aria-label="Auto keying options"><svg class="dn faint"><use href="#down"/></svg></button></div>
          <div class="join transport"><button class="gray sq" aria-label="First frame"><svg class="ic"><use href="#first"/></svg></button><button class="gray sq" aria-label="Previous keyframe"><svg class="ic"><use href="#prevkey"/></svg></button><button class="gray sq" aria-label="Play reverse"><svg class="ic"><use href="#playback"/></svg></button><button class="gray sq" aria-label="Play"><svg class="ic"><use href="#play"/></svg></button><button class="gray sq" aria-label="Next keyframe"><svg class="ic"><use href="#nextkey"/></svg></button><button class="gray sq" aria-label="Last frame"><svg class="ic"><use href="#last"/></svg></button></div>
        </div>
        <input class="frame" type="text" value="1" aria-label="Current frame">
        <div class="join range"><button class="gray sq" aria-label="Use preview range"><svg class="ic"><use href="#stopwatch"/></svg></button><label class="rf">Start<input type="text" value="1"></label><label class="rf">End<input type="text" value="250"></label></div>
      </div>
      <div class="ruler"><div class="playhead">1</div>
        <div class="ticks"><span>20</span><span>40</span><span>60</span><span>80</span><span>100</span><span>120</span><span>140</span><span>160</span><span>180</span><span>200</span><span>220</span><span>240</span></div>
        <div class="tbar"><i></i><i></i></div>
      </div>
    </section>
  </div>

  <aside class="right-col">
    <section class="area outliner">
      <div class="head ol-head">
        <button class="btn ed" aria-label="Editor type"><svg class="ic"><use href="#outliner"/></svg><svg class="dn"><use href="#down"/></svg></button>
        <button class="btn ed" aria-label="Display mode"><svg class="ic"><use href="#layers"/></svg><svg class="dn"><use href="#down"/></svg></button>
        <label class="search"><svg class="ic"><use href="#search"/></svg><input type="text" placeholder="Search" aria-label="Search outliner"></label>
      </div>
      <ul class="ol">
        <li class="l0"><svg class="ic"><use href="#archive"/></svg><span>Scene Collection</span></li>
        <li class="l1"><svg class="op"><use href="#open"/></svg><i class="chip"><svg class="ic"><use href="#archive"/></svg></i><span>Collection</span><div class="tog"><input type="checkbox" checked aria-label="Exclude"><svg class="ic"><use href="#eye"/></svg><svg class="ic"><use href="#camera"/></svg></div></li>
        <li class="l2"><svg class="rt"><use href="#right"/></svg><i class="chip"><svg class="ic"><use href="#tri"/></svg></i><span>Icospher</span><div class="tog"><svg class="ic"><use href="#eye"/></svg><svg class="ic"><use href="#camera"/></svg></div></li>
      </ul>
      <div class="olbar"></div>
    </section>

    <section class="area props">
      <div class="head pr-head">
        <button class="btn ed" aria-label="Editor type"><svg class="ic"><use href="#props"/></svg><svg class="dn"><use href="#down"/></svg></button>
        <label class="search"><svg class="ic"><use href="#search"/></svg><input type="text" placeholder="Search" aria-label="Search properties"></label>
        <button class="btn opt" aria-label="Options"><svg class="dn"><use href="#down"/></svg></button>
      </div>
      <div class="pr-main">
        <nav class="ptabs">
          <button aria-label="Tool"><svg class="ic"><use href="#tool"/></svg></button><hr>
          <button aria-label="Render"><svg class="ic"><use href="#render"/></svg></button>
          <button aria-label="Output"><svg class="ic"><use href="#output"/></svg></button>
          <button aria-label="View layer"><svg class="ic"><use href="#layers"/></svg></button>
          <button aria-label="Scene"><svg class="ic"><use href="#scene"/></svg></button>
          <button class="on" aria-label="World"><svg class="ic"><use href="#world"/></svg></button>
          <button class="last" aria-label="Collection"><svg class="ic"><use href="#archiveline"/></svg></button><hr>
          <button class="c-obj" aria-label="Object"><svg class="ic"><use href="#object"/></svg></button>
          <button class="c-mod" aria-label="Modifiers"><svg class="ic"><use href="#wrench"/></svg></button>
          <button class="c-mod" aria-label="Particles"><svg class="ic"><use href="#particles"/></svg></button>
          <button class="c-mod" aria-label="Physics"><svg class="ic"><use href="#physics"/></svg></button>
          <button class="c-mod" aria-label="Constraints"><svg class="ic"><use href="#constraint"/></svg></button>
          <button class="c-dat" aria-label="Data"><svg class="ic"><use href="#mesh"/></svg></button>
          <button class="c-mat" aria-label="Material"><svg class="ic"><use href="#material"/></svg></button>
        </nav>
        <div class="pr-body">
          <div class="path"><svg class="ic"><use href="#scene"/></svg><span>Sc...</span><svg class="rt"><use href="#right"/></svg><svg class="ic"><use href="#world"/></svg><span>W...</span><button class="bare push" aria-label="Pin"><svg class="ic mid"><use href="#pin"/></svg></button></div>
          <div class="idrow world-id">
            <button class="ed" aria-label="Browse world"><svg class="ic"><use href="#world"/></svg><svg class="dn"><use href="#down"/></svg></button>
            <label class="idname"><input type="text" value="World" aria-label="World name"></label>
            <button class="gray sq" aria-label="Fake user"><svg class="ic mid"><use href="#shield"/></svg></button>
            <button class="gray sq" aria-label="New world"><svg class="ic"><use href="#copy"/></svg></button>
            <button class="gray sq" aria-label="Unlink"><svg class="ic"><use href="#x"/></svg></button>
          </div>
          <section class="panel open">
            <h2><svg class="op"><use href="#open"/></svg>Surface<i class="grip"></i></h2>
            <button class="use"><svg class="ic"><use href="#nodes"/></svg><span>Use Nodes</span></button>
            <div class="prop first"><span>Surface</span><button class="val link"><i class="dot g"></i>Backgr...</button></div>
            <div class="prop second"><span>Color</span><div class="val split"><button aria-label="Link"><i class="dot y"></i></button><button aria-label="Color"></button></div><i class="key"></i></div>
            <div class="prop"><label for="stren">Stren...</label><div class="val split"><button aria-label="Link"><i class="dot w"></i></button><input id="stren" type="text" value="1.0"></div><i class="key"></i></div>
          </section>
          <section class="panel"><h2><svg class="rt"><use href="#right"/></svg>Volume<i class="grip"></i></h2></section>
          <section class="panel"><h2><svg class="rt"><use href="#right"/></svg>Mist Pass<i class="grip"></i></h2></section>
          <section class="panel"><h2><svg class="rt"><use href="#right"/></svg>Settings<i class="grip"></i></h2></section>
          <section class="panel"><h2><svg class="rt"><use href="#right"/></svg>Viewport Display<i class="grip"></i></h2></section>
          <section class="panel"><h2><svg class="rt"><use href="#right"/></svg>Custom Properties<i class="grip"></i></h2></section>
        </div>
      </div>
    </section>
  </aside>
</main>

<footer class="status">
  <div class="hint"><svg><use href="#mouseL"/></svg>Select</div>
  <div class="hint"><svg><use href="#mouseM"/></svg>Rotate View</div>
  <div class="hint"><svg><use href="#mouseR"/></svg>Object</div>
  <div class="ver"><svg class="ic"><use href="#globeoff"/></svg><i></i>4.2.0</div>
</footer>
<script src="scene.js"></script>
</body>
</html>
```
FILE: styles.css
```css
:root {
  --text: #e2e2e2;
  --fs: 37px;
  --nfs: 22px;
  --blue: #4772b3;
  --line: #3d3d3d;
}
* { box-sizing: border-box; }
body {
  margin: 0;
  height: 100vh;
  display: flex;
  flex-direction: column;
  overflow: hidden;
  background: #181818;
  color: var(--text);
  font: 400 var(--fs)/1.2 Inter, sans-serif;
  font-feature-settings: "cv08";
  text-shadow: 0 2px 3px rgba(0, 0, 0, .5);
  border: 1px solid #fff;
  border-width: 1px 0 1px 1px;
  border-bottom-color: #555;
}
button, input, select {
  font: inherit;
  font-feature-settings: inherit;
  color: inherit;
  text-shadow: inherit;
  background: none;
  border: 0;
  padding: 0;
  margin: 0;
  min-width: 0;
  appearance: none;
}
ul, h2, h3, p { margin: 0; padding: 0; list-style: none; font-weight: 400; font-size: inherit; }
i { font-style: normal; }
.sprite { position: absolute; width: 0; height: 0; }
.s2, .s3, .s4 { fill: none; stroke: currentColor; stroke-width: 2.5px; }
.s3 { stroke-width: 3px; }
.s4 { stroke-width: 4px; }
.dim { opacity: .65; }
.ic { width: 48px; height: 48px; flex: none; overflow: visible; }
.ic.wide { width: 54px; }
.mid { color: #a8a8a8; }
.faint { color: #6c6c6c; }
.dn { width: 24px; height: 24px; flex: none; }
.rt { width: 24px; height: 40px; flex: none; color: #bdbdbd; }
.op { width: 40px; height: 40px; flex: none; }
.push { margin-left: auto; }

/* shared controls */
.area { position: relative; overflow: hidden; border-radius: 14px; background: #303030; min-height: 0; min-width: 0; }
.head { height: 86px; flex: none; display: flex; align-items: center; gap: 18px; padding: 0 25px; }
.btn, .dd, .join.outline {
  height: 64px; background: #282828; border: 2px solid var(--line); border-radius: 12px;
  display: flex; align-items: center; flex: none;
}
.ed { width: 102px; flex: none; display: flex; align-items: center; justify-content: center; gap: 3px; height: 100%; }
.btn.ed { height: 64px; }
.idrow .ed { width: 100px; }
.bare { display: flex; }
.dd { padding: 0 8px 0 25px; }
.dd select { flex: 1; height: 100%; }
.menus { display: flex; flex: none; }
.menus button { padding: 0 25px; height: 64px; }
.join { display: flex; height: 64px; border-radius: 12px; overflow: hidden; background: #282828; gap: 1px; flex: none; }
.soft { background: #2c2c2c; }
.fade { opacity: .8; }
.sq { width: 63px; height: 100%; display: flex; align-items: center; justify-content: center; flex: none; }
.gray { background: #545454; }
.off { background: #343434; color: #6a6a6a; }
.blue { background: var(--blue); color: #fff; }
.idrow { display: flex; height: 66px; border: 2px solid var(--line); border-radius: 14px; overflow: hidden; background: #282828; gap: 1px; flex: none; }
.idname { flex: 1; min-width: 0; display: flex; align-items: center; background: #1d1d1d; padding: 0 14px 0 23px; border-left: 2px solid var(--line); }
.idname input { flex: 1; width: 0; }
.search { display: flex; align-items: center; gap: 24px; height: 66px; background: #1d1d1d; border: 2px solid var(--line); border-radius: 12px; padding: 0 14px; min-width: 0; }
.search input { flex: 1; width: 0; }
.search input::placeholder { color: #6e6e6e; opacity: 1; }
.flap { position: absolute; width: 28px; height: 46px; background: #262626; color: #8c8c8c; border-radius: 8px 0 0 8px; display: flex; align-items: center; justify-content: center; }
.flap svg { width: 22px; height: 38px; }

/* top bar */
.topbar { height: 90px; flex: none; display: flex; align-items: center; padding: 0 23px 0 32px; }
.logo { margin: 0 4px 0 0; display: flex; }
.topbar .menus { margin-right: 47px; }
.tabs { display: flex; align-self: flex-end; gap: 1px; height: 73px; padding-bottom: 3px; flex: none; }
.tabs button { padding: 4px 32px 0; background: #1d1d1d; color: #999; border-radius: 10px 10px 0 0; }
.tabs button:last-child { padding-right: 6px; }
.scene-id { width: 565px; margin-left: auto; }
.layer-id { width: 500px; margin-left: 16px; }

/* screen layout */
.screen { flex: 1; min-height: 0; display: flex; gap: 6px; padding-left: 2px; }
.left-col { flex: 1; min-width: 0; display: grid; grid-template-columns: minmax(0, 1fr); grid-template-rows: minmax(0, 1130fr) minmax(0, 707fr) auto; gap: 6px; }
.upper { display: flex; gap: 6px; min-height: 0; }
.right-col { width: 662px; flex: none; display: grid; grid-template-columns: minmax(0, 1fr); grid-template-rows: minmax(0, 568fr) minmax(0, 1427fr); gap: 6px; }

/* spreadsheet */
.sheet { width: 908px; flex: none; display: flex; flex-direction: column; }
.eval { width: 340px; }
.obj { margin-left: 9px; }
.obj + span { margin-left: 12px; }
.sheet .push { margin-right: 12px; }
.sheet-body { flex: 1; min-height: 0; display: flex; align-items: stretch; padding-left: 25px; gap: 26px; }
.tree { width: 565px; flex: none; align-self: flex-start; margin-top: 25px; padding: 13px 15px 5px; background: #262626; border: 2px solid var(--line); border-radius: 14px; color: #cfcfcf; }
.tree ul { position: relative; }
.tree ul::before { content: ""; position: absolute; left: 22px; top: 8px; bottom: 8px; width: 2px; background: rgba(255, 255, 255, .2); }
.trow { display: flex; align-items: center; height: 60px; margin: 6px 0 12px; border-radius: 10px; padding: 0 17px 0 0; }
.trow .ic { margin: 0 28px 0 14px; }
.sub { padding-left: 85px; }
.sub .ic { margin-left: 14px; }
.trow b { margin-left: auto; font-weight: 400; color: #828282; }
.sel { background: var(--blue); }
.sel b { color: #b9c6dc; }
.cells { flex: 1; display: grid; grid-template: 70px 1fr / 74px 1fr; }
.corner-cell, .col-head { background: #323232; border-bottom: 2px solid #1a1a1a; }
.corner-cell, .index { border-right: 2px solid #1a1a1a; }
.index { background: repeating-linear-gradient(#323232 0 66px, #363636 66px 132px); }
.data { background: repeating-linear-gradient(#272727 0 66px, #2b2b2b 66px 132px); }
.sheet-foot { height: 84px; flex: none; display: flex; align-items: center; justify-content: flex-end; gap: 36px; padding-right: 29px; }
.sheet-foot i { width: 3px; height: 44px; background: #ccc; }
.flap-sheet { right: 0; top: 134px; }

/* 3D viewport */
.viewport { flex: 1; background: #3d3d3d; display: flex; flex-direction: column; }
.scene3d { position: absolute; inset: 0; width: 100%; height: 100%; text-shadow: none; }
.label3d { fill: #8a7020; font-weight: 500; }
.vp-head { position: relative; height: 88px; padding: 0; gap: 20px; background: rgba(48, 48, 48, .6); }
.mode { width: 141px; justify-content: flex-end; border-left: 0; border-radius: 0 12px 12px 0; padding: 0 8px 0 0; overflow: hidden; }
.mode select { flex: none; margin-right: 20px; }
.vp-head .menus { margin: 0 33px 0 -3px; }
.orient { width: 254px; padding: 0 6px 0 12px; gap: 20px; }
.orient select { flex: 1; }
.vis { margin-left: 32px; }
.vp-row { position: relative; display: flex; justify-content: space-between; height: 82px; }
.vp-shade { background: rgba(48, 48, 48, .6); border-radius: 0 0 0 14px; padding: 8px 26px 0 28px; }
.vp-shade.left { border-radius: 0 0 14px 0; padding: 8px 25px 0 26px; }
.vp-row .join { background: #333; }
.options { padding: 0 7px 0 22px; gap: 22px; }
.vp-body { position: relative; flex: 1; min-height: 0; display: flex; padding: 28px 0 0 26px; gap: 58px; }
.toolbar { width: 132px; flex: none; display: flex; flex-direction: column; gap: 20px; }
.tgroup { display: flex; flex-direction: column; gap: 2px; border-radius: 14px; overflow: hidden; background: #3d3d3d; flex: none; }
.tool { height: 112px; background: #282828; display: block; }
.tool svg { display: block; width: 132px; height: 110px; }
.tool.on { background: var(--blue); }
.more { fill: #999; }
.overlay-text { line-height: 60px; margin-top: -4px; text-shadow: 0 0 4px #000; }
.axes { position: absolute; right: 31px; top: 219px; width: 270px; height: 240px; text-shadow: none; }
.ax { font-weight: 600; font-size: 32px; text-anchor: middle; fill: #16202a; }
.nav3d { position: absolute; right: 31px; top: 479px; display: flex; flex-direction: column; gap: 10px; }
.nav3d button { width: 92px; height: 92px; border-radius: 50%; background: rgba(20, 20, 20, .45); display: flex; align-items: center; justify-content: center; }
.nav3d svg { width: 52px; height: 52px; }
.flap-vp { right: 0; top: 220px; background: #333; }

/* node editor */
.nodes { background: #1d1d1d; display: flex; flex-direction: column; }
.nd-head { height: 83px; }
.modi { width: 258px; }
.nd-head .menus { margin-left: -1px; }
.tree-id { width: 727px; margin-left: 146px; }
.nodes .bare { margin-left: 8px; }
.nd-right { display: flex; gap: 20px; margin-left: auto; }
.nd-right .join:nth-child(2) { background: #282828; }
.canvas { position: relative; flex: 1; min-height: 0; overflow: hidden; background: radial-gradient(circle, #2a2a2a 2px, transparent 3px) 40px 57px / 194px 194px; }
.links { position: absolute; inset: 0; width: 100%; height: 100%; overflow: visible; }
.crumbs { position: relative; display: flex; align-items: center; height: 48px; margin: 49px 0 0 62px; }
.crumbs span { margin: 0 52px 0 30px; }
.crumbs .rt + .ic { margin-left: 28px; }
.crumbs .rt { color: #ccc; }
.node { position: absolute; width: 271px; border-radius: 7px; background: #303030; font-size: var(--nfs); --row: 42px; box-shadow: 0 8px 18px 4px rgba(0, 0, 0, .5); outline: 1px solid #111; }
.tight { --row: 41px; }
.node h3 { display: flex; align-items: center; gap: 4px; height: 38px; padding-left: 16px; border-radius: 7px 7px 0 0; font-size: inherit; white-space: nowrap; }
.node h3 svg { width: 26px; height: 26px; flex: none; }
.node h3 .gi { width: 28px; margin: 0 10px 0 auto; }
.io { background: #1d1d1d; }
.geoh { background: #1d725e; }
.math { background: #246283; }
.grp { background: #354a24; }
.nb { padding: 7px 0; }
.nr { position: relative; height: var(--row); display: flex; align-items: center; padding: 0 20px; white-space: nowrap; }
.nr.out { justify-content: flex-end; padding-right: 23px; }
.gap { margin-top: 5px; }
.biggap { margin-top: 9px; }
.clamp { margin: 4px 0 0; }
.n-mul .nb { padding-bottom: 11px; }
.n-view .gap { margin-top: 7px; }
.sk { position: absolute; left: -8px; top: 50%; width: 16px; height: 16px; margin-top: -8px; background: var(--c); border: 2px solid #111; }
.out .sk { left: auto; right: -8px; }
.sk.c { border-radius: 50%; width: 18px; height: 18px; margin-top: -9px; }
.sk.d { transform: rotate(45deg); width: 13px; height: 13px; margin-top: -7px; left: -6px; border-width: 1px; }
.out .sk.d { left: auto; right: -6px; }
.sk.h::after { content: ""; position: absolute; inset: 3px; background: #111; border-radius: 50%; }
.sk.pill { height: 38px; margin-top: -19px; border-radius: 8px; }
.geo { --c: #00d6a3; }
.int { --c: #598c5c; }
.bool { --c: #cca6d6; }
.flt { --c: #a1a1a1; }
.vec { --c: #6363c7; }
.col { --c: #c7c729; }
.void { background: #222; border-color: #777; }
.num { flex: 1; display: flex; align-items: center; justify-content: space-between; height: 36px; min-width: 0; background: #545454; border-radius: 6px; padding: 0 26px 0 30px; }
.num input { flex: 1; width: 0; text-align: right; }
.ndd { flex: 1; display: flex; align-items: center; height: 36px; background: #282828; border: 2px solid var(--line); border-radius: 6px; padding: 0 4px 0 11px; }
.ndd select { flex: 1; }
.ndd svg { width: 17px; height: 17px; }
.chk label { display: flex; align-items: center; gap: 6px; }
.chk input { width: 27px; height: 27px; border-radius: 5px; background: #545454; display: grid; place-items: center; flex: none; }
.chk input:checked { background: var(--blue); }
.chk input:checked::after { content: ""; width: 7px; height: 14px; border: solid #fff; border-width: 0 4px 4px 0; transform: rotate(40deg); margin-top: -4px; }
.n-view .nr { padding-right: 21px; }
.swatch { width: 129px; height: 35px; margin-left: auto; border-radius: 5px; background: #e79e17; }
.nid { flex: 1; display: flex; height: 36px; border: 1px solid var(--line); border-radius: 6px; background: #282828; overflow: hidden; }
.nid button { display: flex; align-items: center; justify-content: center; width: 57px; flex: none; }
.nid .lk { width: 36px; background: #545454; }
.nid input { flex: 1; width: 0; color: #808080; padding-left: 12px; border-left: 1px solid var(--line); }
.nid .a { width: 26px; height: 26px; }
.nid .b { width: 17px; height: 17px; }
.named { position: absolute; left: 2335px; top: 0; width: 260px; height: 27px; line-height: 26px; background: #1a1a1a; font-size: var(--nfs); display: flex; align-items: center; gap: 11px; padding: 0 0 8px 6px; white-space: nowrap; }
.named svg { width: 32px; height: 24px; }
.n-in { left: 78px; top: 147px; }
.n-g2i { left: 428px; top: 181px; width: 311px; }
.n-dup { left: 888px; top: 125px; }
.n-mul { left: 1260px; top: 273px; }
.n-xyz { left: 1603px; top: 282px; }
.n-tr { left: 1932px; top: 66px; }
.n-view { left: 2329px; top: 28px; }
.n-out { left: 2702px; top: 55px; outline: 3px solid #fff; outline-offset: -2px; }
.n-in .nb, .n-out .nb { padding-bottom: 8px; }
.hbar { position: absolute; left: 26px; right: 30px; bottom: 6px; height: 10px; border-radius: 5px; background: rgba(84, 84, 84, .5); }
.vbar { position: absolute; right: 7px; top: 32px; width: 12px; height: 372px; border-radius: 6px; background: #343434; }
.flap-nl { left: -4px; top: 51px; border-radius: 0 8px 8px 0; background: #171717; color: #bbb; }
.flap-nr { right: 0; top: 50px; background: #171717; }

/* timeline */
.tl-head { height: 84px; }
.join.outline .pb { display: flex; align-items: center; justify-content: space-between; width: 237px; padding: 0 10px 0 23px; }
.join.outline .pb + .pb { border-left: 2px solid var(--line); width: 198px; padding-right: 6px; }
.tl-head .menus { margin-left: -11px; }
.tl-mid { display: flex; gap: 18px; margin-left: auto; }
.tl-mid .soft .sq:last-child { width: 66px; }
.transport .sq { width: 65px; }
.transport { background: #404040; }
.frame { width: 241px; height: 64px; margin-left: 406px; background: #545454; border-radius: 12px; text-align: center; flex: none; }
.range { width: 638px; background: #404040; margin-left: 2px; }
.rf { flex: 1; display: flex; align-items: center; background: #545454; padding: 0 54px 0 50px; min-width: 0; }
.rf input { flex: 1; width: 0; text-align: right; }
.rf:last-child { padding-right: 46px; }
.ruler { position: relative; height: 67px; background: #1d1d1d; overflow: hidden; }
.ticks { display: grid; grid-template-columns: repeat(12, 236px); padding: 19px 0 0 220px; color: #999; text-align: center; }
.playhead { position: absolute; left: 75px; top: 10px; width: 81px; height: 56px; border-radius: 12px; background: var(--blue); color: #fff; text-align: center; padding-top: 8px; }
.tbar { position: absolute; left: 27px; right: 29px; top: 30px; height: 30px; border-radius: 15px; background: #545454; border: 2px solid #474747; display: flex; justify-content: space-between; align-items: center; padding: 0 1px; }
.tbar i { width: 22px; height: 22px; border-radius: 50%; background: #282828; border: 2px solid #666; }

/* outliner */
.outliner { background: #282828; display: flex; flex-direction: column; }
.ol-head { gap: 17px; }
.ol-head .search { margin-left: 34px; width: 400px; flex: none; }
.ol { flex: 1; padding-top: 3px; color: #c0c0c0; background: repeating-linear-gradient(#282828 0 66px, #2b2b2b 66px 132px); }
.ol li { position: relative; display: flex; align-items: center; height: 66px; white-space: nowrap; }
.ol span { overflow: hidden; margin-left: 14px; }
.ol .ic { color: #dedede; height: 44px; }
.l0 { padding-left: 76px; }
.ol .l0 span { margin-left: 21px; width: 289px; }
.l1 { padding-left: 78px; }
.l2 { padding-left: 154px; }
.ol .l1 span { width: 200px; }
.ol .l2 span { width: 157px; }
.l2::before { content: ""; position: absolute; left: 96px; top: 16px; width: 2px; height: 34px; background: #5c5c5c; }
.chip { width: 65px; height: 58px; border-radius: 14px; background: #545454; border: 2px solid #696969; display: flex; align-items: center; justify-content: center; margin-left: 14px; flex: none; }
.l2 .chip { margin-left: 20px; }
.tog { margin-left: auto; display: flex; align-items: center; gap: 18px; padding: 0 39px 6px 0; }
.tog input { width: 34px; height: 34px; border-radius: 4px; background: #e6e6e6; display: grid; place-items: center; margin-right: 6px; }
.tog input::after { content: ""; width: 12px; height: 20px; border: solid #222; border-width: 0 5px 5px 0; transform: rotate(45deg); margin-top: -6px; }
.tog .ic { height: 38px; color: #e2e2e2; }
.olbar { position: absolute; left: 26px; bottom: 6px; width: 454px; height: 10px; border-radius: 5px; background: #3a3a3a; }

/* properties */
.props { display: flex; flex-direction: column; }
.pr-head { padding-right: 0; gap: 0; padding-top: 0; }
.pr-head .search { width: 389px; flex: none; margin: 0 51px 0 70px; }
.opt { width: 60px; padding-left: 18px; }
.pr-main { flex: 1; min-height: 0; display: flex; }
.ptabs { width: 96px; flex: none; background: #1d1d1d; padding: 27px 0 0 8px; color: #a8a8a8; overflow: hidden; }
.ptabs button { display: flex; align-items: center; justify-content: center; width: 88px; height: 88px; margin-bottom: 4px; border-radius: 12px 0 0 12px; }
.ptabs hr { height: 2px; border: 0; background: #161616; margin: 0 0 20px; }
.ptabs .on { background: #303030; color: #cc6670; }
.ptabs .last { margin-top: 32px; margin-bottom: 0; color: #dcdcdc; }
.ptabs hr + .c-obj { margin-top: 26px; }
.c-obj { color: #c1824d; }
.c-mod { color: #5f87d6; }
.c-dat { color: #0aa883; }
.c-mat { color: #b05660; }
.pr-body { flex: 1; min-width: 0; padding: 34px 28px 0 26px; display: flex; flex-direction: column; gap: 6px; }
.path { display: flex; align-items: center; height: 48px; padding-left: 10px; }
.path span { margin-left: 31px; }
.path .rt { margin: 0 28px; color: #ccc; }
.path .push { margin-right: 8px; }
.world-id { height: 65px; margin: 54px 0 28px; }
.panel { background: #3d3d3d; border-radius: 10px; }
.panel h2 { display: flex; align-items: center; height: 82px; padding-left: 22px; white-space: nowrap; }
.panel h2 .op { color: #bbb; margin-right: 11px; }
.panel h2 .rt { margin: 0 15px 0 12px; }
.grip { width: 38px; height: 18px; margin: -6px 24px 0 auto; background: linear-gradient(#3d3d3d 0 0) 0 8px / 100% 2px no-repeat, repeating-linear-gradient(90deg, #9a9a9a 0 6px, #3d3d3d 6px 10px); }
.open { padding-bottom: 28px; }
.use { position: relative; display: flex; align-items: center; width: 456px; height: 62px; margin: 29px 0 0 28px; padding-left: 14px; border-radius: 10px; background: var(--blue); color: #fff; }
.use span { flex: 1; margin-left: 4px; }
.prop { display: flex; align-items: center; height: 62px; margin-top: 20px; }
.prop.first { margin-top: 54px; }
.prop.second { margin-top: 54px; }
.prop > span, .prop > label { width: 169px; text-align: right; flex: none; }
.val { width: 218px; height: 62px; margin-left: 31px; border-radius: 10px; background: #282828; flex: none; overflow: hidden; }
.link { display: flex; align-items: center; padding-left: 17px; gap: 20px; white-space: nowrap; }
.split { display: flex; gap: 2px; background: #3a3a3a; }
.split button { flex: 1; background: #282828; }
.split button:first-child { flex: 0 0 62px; display: grid; place-items: center; }
.split input { flex: 1; width: 0; text-align: center; background: #545454; }
.dot { width: 29px; height: 29px; border-radius: 50%; border: 2px solid #000; flex: none; }
.g { background: #63c763; }
.y { background: #c7c729; }
.w { background: #a1a1a1; }
.key { width: 14px; height: 14px; border-radius: 50%; background: #dcdcdc; margin-left: 28px; }

/* status bar */
.status { height: 66px; flex: none; display: flex; align-items: center; color: #8f8f8f; padding: 4px 42px 0 40px; }
.hint { width: 704px; display: flex; align-items: center; gap: 15px; }
.hint svg { width: 40px; height: 52px; }
.ver { margin-left: auto; display: flex; align-items: center; gap: 14px; }
.ver i { width: 3px; height: 44px; background: #6a6a6a; margin-left: 12px; }
```
FILE: scene.js
```js
// Draws the floor grid, the axes and the instanced icospheres of the 3D viewport.
(function () {
  var NS = "http://www.w3.org/2000/svg";
  var F = 1567, CX = 1127, CY = 565, D0 = 10.33;
  function unit(v) { var l = Math.hypot(v[0], v[1], v[2]); return [v[0] / l, v[1] / l, v[2] / l]; }
  // world axes in camera space: x right, y down, z forward
  var AX = unit([5682, -1392, F]), AY = unit([-773, -1392, F]), AZ = unit([0, -1764, -F]);
  var ORIGIN = [(504.5 - CX) / F * D0, (893 - CY) / F * D0, D0];
  function cam(x, y, z) {
    return [0, 1, 2].map(function (i) { return ORIGIN[i] + x * AX[i] + y * AY[i] + z * AZ[i]; });
  }
  function proj(p) { return [CX + F * p[0] / p[2], CY + F * p[1] / p[2]]; }
  function add(parent, tag, attrs) {
    var e = document.createElementNS(NS, tag);
    for (var k in attrs) e.setAttribute(k, attrs[k]);
    parent.appendChild(e);
  }
  var grid = document.getElementById("grid"), NEAR = 1;
  function line(a, b, color, width) {
    if (a[2] < NEAR && b[2] < NEAR) return;
    if (a[2] < NEAR || b[2] < NEAR) {
      var t = (NEAR - a[2]) / (b[2] - a[2]);
      var c = a.map(function (v, i) { return v + t * (b[i] - v); });
      if (a[2] < NEAR) a = c; else b = c;
    }
    var p = proj(a), q = proj(b);
    add(grid, "line", { x1: p[0], y1: p[1], x2: q[0], y2: q[1], stroke: color, "stroke-width": width });
  }
  for (var i = -40; i <= 60; i++) {
    if (i === 0) continue;
    var col = i % 10 ? "#494949" : "#545454";
    line(cam(i, -60, 0), cam(i, 60, 0), col, 3);
    line(cam(-60, i, 0), cam(60, i, 0), col, 3);
  }
  line(cam(-60, 0, 0), cam(60, 0, 0), "#933a49", 3);
  line(cam(0, -60, 0), cam(0, 60, 0), "#658c22", 4);

  var V = [[0, 0, -1], [.7236, -.5257, -.4472], [-.2764, -.8506, -.4472], [-.8944, 0, -.4472],
    [-.2764, .8506, -.4472], [.7236, .5257, -.4472], [.2764, -.8506, .4472], [-.7236, -.5257, .4472],
    [-.7236, .5257, .4472], [.2764, .8506, .4472], [.8944, 0, .4472], [0, 0, 1]];
  var FACES = [[0, 1, 2], [1, 0, 5], [0, 2, 3], [0, 3, 4], [0, 4, 5], [1, 5, 10], [2, 1, 6], [3, 2, 7],
    [4, 3, 8], [5, 4, 9], [1, 10, 6], [2, 6, 7], [3, 7, 8], [4, 8, 9], [5, 9, 10], [6, 10, 11],
    [7, 6, 11], [8, 7, 11], [9, 8, 11], [10, 9, 11]];
  var tris = [];
  FACES.forEach(function (f) {
    var a = V[f[0]], b = V[f[1]], c = V[f[2]];
    function m(p, q) { return unit([p[0] + q[0], p[1] + q[1], p[2] + q[2]]); }
    var ab = m(a, b), bc = m(b, c), ca = m(c, a);
    tris.push([a, ab, ca], [ab, b, bc], [ca, bc, c], [ab, bc, ca]);
  });
  var L = unit([-.4, -.24, -.88]);
  var out = document.getElementById("spheres");
  for (var s = 4; s >= 0; s--) {
    tris.forEach(function (t) {
      var p = t.map(function (v) { return cam(v[0] + s * 3, v[1], v[2]); });
      var c = cam(s * 3, 0, 0);
      var g = [0, 1, 2].map(function (i) { return (p[0][i] + p[1][i] + p[2][i]) / 3; });
      var n = unit([g[0] - c[0], g[1] - c[1], g[2] - c[2]]);
      if (n[0] * g[0] + n[1] * g[1] + n[2] * g[2] > 0) return;
      var d = n[0] * L[0] + n[1] * L[1] + n[2] * L[2];
      var k = Math.max(54, Math.round(54 + 124 * d));
      var fill = "rgb(" + (k < 75 ? k + 3 : k) + "," + (k + 1) + "," + (k + 1) + ")";
      add(out, "polygon", { points: p.map(function (q) { return proj(q).join(","); }).join(" "),
        fill: fill, stroke: fill, "stroke-width": 1, "stroke-linejoin": "round" });
    });
  }
})();
```
